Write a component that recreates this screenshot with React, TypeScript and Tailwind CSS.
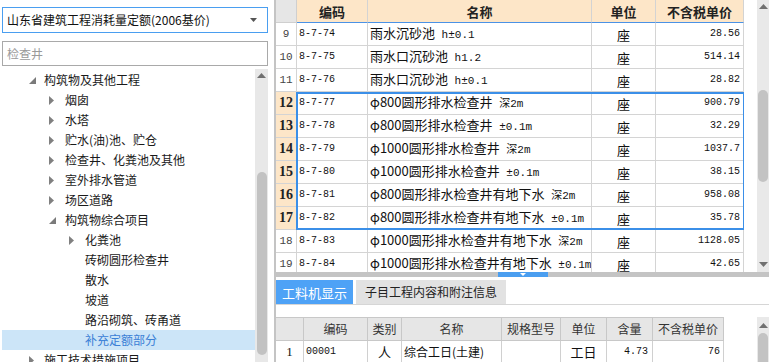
import React from 'react';

type TreeItem = { l: 1 | 2 | 3; t: string; tri?: 'open' | 'closed'; sel?: boolean };

const tree: TreeItem[] = [
  { l: 1, t: '构筑物及其他工程', tri: 'open' },
  { l: 2, t: '烟囱', tri: 'closed' },
  { l: 2, t: '水塔', tri: 'closed' },
  { l: 2, t: '贮水(油)池、贮仓', tri: 'closed' },
  { l: 2, t: '检查井、化粪池及其他', tri: 'closed' },
  { l: 2, t: '室外排水管道', tri: 'closed' },
  { l: 2, t: '场区道路', tri: 'closed' },
  { l: 2, t: '构筑物综合项目', tri: 'open' },
  { l: 3, t: '化粪池', tri: 'closed' },
  { l: 3, t: '砖砌圆形检查井' },
  { l: 3, t: '散水' },
  { l: 3, t: '坡道' },
  { l: 3, t: '路沿砌筑、砖甬道' },
  { l: 3, t: '补充定额部分', sel: true },
  { l: 1, t: '施工技术措施项目', tri: 'closed' },
];

const rows = [
  { n: 9, code: '8-7-74', a: '雨水沉砂池', b: ' h±0.1', p: '28.56' },
  { n: 10, code: '8-7-75', a: '雨水口沉砂池', b: ' h1.2', p: '514.14' },
  { n: 11, code: '8-7-76', a: '雨水口沉砂池', b: ' h±0.1', p: '28.82' },
  { n: 12, code: '8-7-77', a: 'φ800圆形排水检查井', b: ' 深2m', p: '900.79' },
  { n: 13, code: '8-7-78', a: 'φ800圆形排水检查井', b: ' ±0.1m', p: '32.29' },
  { n: 14, code: '8-7-79', a: 'φ1000圆形排水检查井', b: ' 深2m', p: '1037.7' },
  { n: 15, code: '8-7-80', a: 'φ1000圆形排水检查井', b: ' ±0.1m', p: '38.15' },
  { n: 16, code: '8-7-81', a: 'φ800圆形排水检查井有地下水', b: ' 深2m', p: '958.08' },
  { n: 17, code: '8-7-82', a: 'φ800圆形排水检查井有地下水', b: ' ±0.1m', p: '35.78' },
  { n: 18, code: '8-7-83', a: 'φ1000圆形排水检查井有地下水', b: ' 深2m', p: '1128.05' },
  { n: 19, code: '8-7-84', a: 'φ1000圆形排水检查井有地下水', b: ' ±0.1m', p: '42.65' },
];

function TriOpen() {
  return (
    <svg width="7" height="7" viewBox="0 0 7 7">
      <path d="M7 0 L7 7 L0 7 Z" fill="#7a7a7a" />
    </svg>
  );
}
function TriClosed() {
  return (
    <svg width="5" height="9" viewBox="0 0 5 9">
      <path d="M0 0 L5 4.5 L0 9 Z" fill="#808080" />
    </svg>
  );
}
function Up() {
  return (
    <svg width="9" height="5" viewBox="0 0 9 5">
      <path d="M0 5 L4.5 0 L9 5 Z" fill="#707070" />
    </svg>
  );
}
function Down({ c = '#707070' }: { c?: string }) {
  return (
    <svg width="9" height="5" viewBox="0 0 9 5">
      <path d="M0 0 L4.5 5 L9 0 Z" fill={c} />
    </svg>
  );
}

const padMap = { 1: 'pl-[27px]', 2: 'pl-[47px]', 3: 'pl-[67px]' } as const;
const boxMap = { 1: 'w-[15px]', 2: 'w-[16px]', 3: 'w-[16px]' } as const;

function LeftPanel() {
  return (
    <div className="w-[274px] shrink-0 h-full flex flex-col pl-[2px] pr-[6px] pt-[7px] bg-white">
      <div className="h-[26px] border border-[#4a9ef0] flex items-center pl-[4px] pr-[10px] text-[12px] text-[#111]">
        <span className="flex-1 whitespace-nowrap">山东省建筑工程消耗量定额(2006基价)</span>
        <svg width="7" height="4" viewBox="0 0 7 4">
          <path d="M0 0 L3.5 4 L7 0 Z" fill="#555" />
        </svg>
      </div>
      <div className="mt-[8px] h-[25px] border border-[#a9a9a9] flex items-center pl-[4px] text-[12px] text-[#9a9a9a]">
        检查井
      </div>
      <div className="mt-[3px] flex-1 flex min-h-0">
        <div className="flex-1 pt-[1px] overflow-hidden">
          {tree.map((it, i) => (
            <div
              key={i}
              className={`h-[20px] flex items-center whitespace-nowrap text-[12px] ${padMap[it.l]} ${
                it.sel ? 'bg-[#cce5f8] text-[#3b80d6]' : 'text-[#1a1a1a]'
              }`}
            >
              <div className={`${boxMap[it.l]} shrink-0 flex items-center`}>
                {it.tri === 'open' ? <TriOpen /> : it.tri === 'closed' ? <TriClosed /> : null}
              </div>
              <span>{it.t}</span>
            </div>
          ))}
        </div>
        <div className="w-[13px] shrink-0 bg-[#e8e8e8] flex flex-col items-center">
          <div className="mt-[4px]">
            <Up />
          </div>
          <div className="mt-[94px] w-[10px] h-[183px] rounded-full bg-[#c2c2c2]" />
        </div>
      </div>
    </div>
  );
}

const mono = "font-['Liberation_Mono','Noto_Sans_CJK_SC',monospace]";

function TopTable() {
  return (
    <div className="relative w-[468px] shrink-0 h-full overflow-hidden">
      <div className="flex h-[23px]">
        <div className="w-[21px] shrink-0 bg-[#e6e6e6] border-r border-b border-[#cfcfcf]" />
        <div className="w-[71px] shrink-0 bg-[#fde6c8] border-r border-[#d3d3d3] border-b border-b-[#4a92e6] flex items-center justify-center text-[13px] font-bold text-[#222]">编码</div>
        <div className="w-[224px] shrink-0 bg-[#fde6c8] border-r border-[#d3d3d3] border-b border-b-[#4a92e6] flex items-center justify-center text-[13px] font-bold text-[#222]">名称</div>
        <div className="w-[64px] shrink-0 bg-[#fde6c8] border-r border-[#d3d3d3] border-b border-b-[#4a92e6] flex items-center justify-center text-[13px] font-bold text-[#222]">单位</div>
        <div className="w-[88px] shrink-0 bg-[#fde6c8] border-r border-[#d3d3d3] border-b border-b-[#4a92e6] flex items-center justify-center text-[13px] font-bold text-[#222]">不含税单价</div>
      </div>
      {rows.map((r) => {
        const sel = r.n >= 12 && r.n <= 17;
        return (
          <div key={r.n} className="flex h-[23px]">
            <div
              className={`w-[21px] shrink-0 border-r border-b border-[#d4d4d4] flex items-center justify-center ${
                sel
                  ? "bg-[#fde6c8] font-bold text-[14px] text-[#222] font-['Liberation_Serif',serif]"
                  : `bg-white text-[11px] text-[#444] ${mono}`
              }`}
            >
              {r.n}
            </div>
            <div className={`w-[71px] shrink-0 border-r border-b border-[#d4d4d4] flex items-center pl-[2px] text-[10px] text-[#111] ${mono}`}>
              {r.code}
            </div>
            <div className="w-[224px] shrink-0 border-r border-b border-[#d4d4d4] flex items-center pl-[2px] overflow-hidden text-[#111]">
              <span className="whitespace-nowrap text-[13px] leading-[16px]">
                {r.a}
                <span className={`text-[11px] whitespace-pre ${mono}`}>{r.b}</span>
              </span>
            </div>
            <div className="w-[64px] shrink-0 border-r border-b border-[#d4d4d4] flex items-center justify-center text-[13px] text-[#111]">
              座
            </div>
            <div className={`w-[88px] shrink-0 border-r border-b border-[#d4d4d4] flex items-center justify-end pr-[3px] text-[10px] text-[#111] ${mono}`}>
              {r.p}
            </div>
          </div>
        );
      })}
      <div className="absolute left-[20px] top-[92px] w-[449px] h-[138px] border-2 border-[#3b8fe8] pointer-events-none" />
    </div>
  );
}

const bCols = [
  { w: 'w-[28px]', t: '' },
  { w: 'w-[64px]', t: '编码' },
  { w: 'w-[34px]', t: '类别' },
  { w: 'w-[100px]', t: '名称' },
  { w: 'w-[59px]', t: '规格型号' },
  { w: 'w-[46px]', t: '单位' },
  { w: 'w-[46px]', t: '含量' },
  { w: 'w-[71px]', t: '不含税单价' },
];

function BottomTable() {
  return (
    <div className="w-[448px] shrink-0">
      <div className="flex h-[24px]">
        {bCols.map((c, i) => (
          <div
            key={i}
            className={`${c.w} shrink-0 bg-[#e6e6e6] border-t border-r border-b border-[#c8c8c8] flex items-center justify-center text-[12px] text-[#333] whitespace-nowrap`}
          >
            {c.t}
          </div>
        ))}
      </div>
      <div className="flex h-[22px] text-[#111]">
        <div className="w-[28px] shrink-0 border-r border-b border-[#d0d0d0] flex items-center justify-center text-[13px] font-['Liberation_Serif',serif]">1</div>
        <div className={`w-[64px] shrink-0 border-r border-b border-[#d0d0d0] flex items-center pl-[2px] text-[10px] ${mono}`}>00001</div>
        <div className="w-[34px] shrink-0 border-r border-b border-[#d0d0d0] flex items-center justify-center text-[13px]">人</div>
        <div className="w-[100px] shrink-0 border-r border-b border-[#d0d0d0] flex items-center pl-[2px] text-[12px] whitespace-nowrap">综合工日(土建)</div>
        <div className="w-[59px] shrink-0 border-r border-b border-[#d0d0d0]" />
        <div className="w-[46px] shrink-0 border-r border-b border-[#d0d0d0] flex items-center justify-center text-[13px]">工日</div>
        <div className={`w-[46px] shrink-0 border-r border-b border-[#d0d0d0] flex items-center justify-end pr-[4px] text-[10px] ${mono}`}>4.73</div>
        <div className={`w-[71px] shrink-0 border-r border-b border-[#d0d0d0] flex items-center justify-end pr-[3px] text-[10px] ${mono}`}>76</div>
      </div>
    </div>
  );
}

function RightPanel() {
  return (
    <div className="flex-1 h-full border-l-2 border-[#c4c4c4] flex flex-col bg-white min-w-0">
      <div className="h-[272px] flex shrink-0">
        <TopTable />
        <div className="w-[13px] shrink-0" />
        <div className="w-[12px] shrink-0 bg-[#e9e9e9] flex flex-col items-center">
          <div className="mt-[4px]">
            <Up />
          </div>
          <div className="mt-[81px] w-[10px] h-[92px] rounded-full bg-[#c3c3c3]" />
          <div className="flex-1" />
          <div className="mb-[5px]">
            <Down />
          </div>
        </div>
      </div>
      <div className="h-[5px] shrink-0 bg-[#c4c4c4] flex">
        <div className="w-[222px] shrink-0" />
        <div className="w-[50px] h-full bg-[#4a9ef0] flex items-center justify-center">
          <svg width="6" height="3" viewBox="0 0 6 3">
            <path d="M0 0 L3 3 L6 0 Z" fill="#ffffff" />
          </svg>
        </div>
      </div>
      <div className="mt-[3px] h-[25px] shrink-0 flex items-stretch border-b border-[#d6d6d6]">
        <div className="w-[77px] bg-[#4ea2f6] text-white text-[13px] flex items-center justify-center whitespace-nowrap">
          工料机显示
        </div>
        <div className="ml-[3px] w-[150px] bg-[#e2e2e2] text-[#222] text-[12px] flex items-center justify-center whitespace-nowrap">
          子目工程内容和附注信息
        </div>
      </div>
      <div className="flex-1 flex pt-[12px]">
        <BottomTable />
        <div className="w-[33px] shrink-0" />
        <div className="w-[12px] shrink-0 bg-[#e9e9e9] flex flex-col items-center">
          <div className="mt-[6px]">
            <Up />
          </div>
          <div className="mt-[5px] w-[10px] flex-1 rounded-t-full bg-[#c3c3c3]" />
        </div>
      </div>
    </div>
  );
}

export default function App() {
  return (
    <div className="w-[769px] h-[362px] overflow-hidden flex bg-white font-['Noto_Sans_CJK_SC',sans-serif] leading-none">
      <LeftPanel />
      <RightPanel />
    </div>
  );
}
